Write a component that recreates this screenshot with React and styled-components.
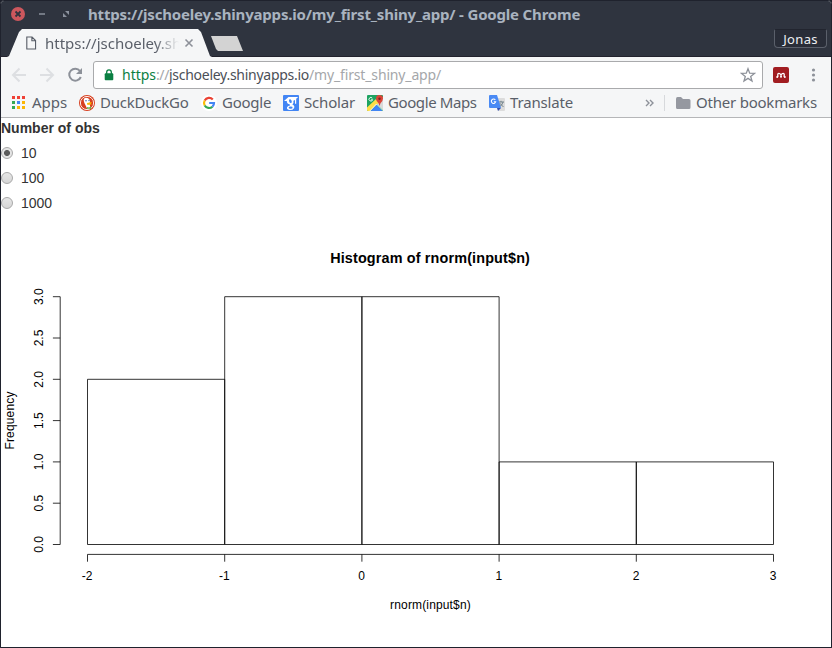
import React from 'react';
import styled, { createGlobalStyle } from 'styled-components';

const Global = createGlobalStyle`
  *, *::before, *::after { box-sizing: border-box; }
  body { margin: 0; background: #1f222d; }
`;

const Window = styled.div`
  width: 832px;
  height: 648px;
  display: flex;
  flex-direction: column;
  overflow: hidden;
  border: 1px solid #1f222d;
  border-radius: 4px 4px 0 0;
  background: #fff;
  font-family: "Noto Sans", "Open Sans", sans-serif;
  font-size: 15px;
  color: #5a5f69;
`;

const TitleBar = styled.header`
  height: 27px;
  flex: none;
  display: flex;
  align-items: flex-start;
  background: #2f343f;
`;

const WindowControls = styled.svg`
  width: 87px;
  height: 27px;
  flex: none;
`;

const Title = styled.div`
  font-weight: 700;
  line-height: 26px;
  letter-spacing: -0.18px;
  color: #a9b3bf;
  white-space: nowrap;
`;

const TabStrip = styled.div`
  height: 29px;
  flex: none;
  display: flex;
  padding: 1px 4px 0 6px;
  background: #2f343f;
  box-shadow: inset 0 -1px #22222d;
`;

const Tab = styled.div`
  width: 205px;
  height: 28px;
  display: flex;
  align-items: center;
  padding-left: 17px;
  background: #f5f6f7;
  clip-path: polygon(0 100%, 2px 96%, 12px 3px, 15px 0, 191px 0, 194px 3px, 203px 96%, 205px 100%);
`;

const TabTitle = styled.div`
  width: 134px;
  margin: 0 5px 0 7px;
  overflow: hidden;
  white-space: nowrap;
  line-height: 26px;
  mask-image: linear-gradient(90deg, #000 82%, transparent 100%);
`;

const NewTab = styled.div`
  width: 34px;
  height: 17px;
  margin: 6px 0 0 -2px;
  background: #d3d3d3;
  clip-path: polygon(1px 1px, 27px 1px, 33px 16px, 8px 16px, 6px 14px);
`;

const Profile = styled.div`
  width: 53px;
  height: 19px;
  margin: 0 0 0 auto;
  border: 1px solid #5b606b;
  border-top-color: #22252f;
  border-radius: 2px 2px 4px 4px;
  background: #292d38;
  color: #eef0f3;
  font-size: 13px;
  line-height: 18px;
  letter-spacing: 0.35px;
  text-align: center;
`;

const Toolbar = styled.div`
  height: 34px;
  flex: none;
  display: flex;
  align-items: center;
  padding: 2px 0 0 9px;
  background: #f5f6f7;
`;

const NavIcon = styled.svg`
  width: 18px;
  height: 18px;
  flex: none;
  margin-right: ${(p) => (p.$enabled ? 9 : 10)}px;
  fill: none;
  stroke: ${(p) => (p.$enabled ? '#8d9199' : '#dddfe2')};
  stroke-width: 2;
`;

const AddressBar = styled.div`
  width: 670px;
  height: 28px;
  flex: none;
  display: flex;
  align-items: center;
  padding: 0 6px 0 9px;
  border: 1px solid #a9aaac;
  border-radius: 3px;
  background: #fff;
  font-size: 14px;
  line-height: 23px;
  white-space: pre;
`;

const UrlPart = styled.span`
  width: ${(p) => p.$width}px;
  height: 25px;
  flex: none;
  letter-spacing: ${(p) => p.$spacing || 0}px;
  color: ${(p) => p.$color};
`;

const Glyph = styled.svg`
  display: block;
  flex: none;
  width: ${(p) => p.$size || 16}px;
  height: ${(p) => p.$size || 16}px;
  margin-left: ${(p) => p.$left || 0}px;
  margin-right: ${(p) => p.$right || 0}px;
`;

const BookmarkBar = styled.nav`
  height: 27px;
  flex: none;
  display: flex;
  align-items: center;
  padding: 0 0 3px 9px;
  border-bottom: 1px solid #b5b6b8;
  background: #f5f6f7;
`;

const Bookmark = styled.div`
  width: ${(p) => p.$width}px;
  flex: none;
  display: flex;
  align-items: center;
  gap: ${(p) => p.$gap || 5}px;
  line-height: 23px;
  letter-spacing: ${(p) => p.$spacing || 0}px;
  white-space: nowrap;
`;

const Divider = styled.div`
  width: 1px;
  height: 16px;
  margin: 0 11px 0 9px;
  background: #d7d9dc;
`;

const Page = styled.main`
  flex: 1;
  display: flex;
  flex-direction: column;
  background: #fff;
  color: #333;
  font-family: "Liberation Sans", Arial, sans-serif;
  font-size: 14px;
  line-height: 20px;
`;

const FieldLabel = styled.div`
  height: 25px;
  font-weight: 700;
`;

const Option = styled.label`
  height: 25px;
  display: flex;
  align-items: flex-start;
  gap: 8px;
`;

const Radio = styled.span`
  width: 12px;
  height: 12px;
  margin-top: 4px;
  border: 1px solid #a8a8a8;
  border-radius: 50%;
  background: ${(p) =>
    p.$checked
      ? 'radial-gradient(circle, #5c5c5c 0 2.6px, #e4e4e4 3.4px)'
      : 'linear-gradient(#e6e6e6, #d6d6d6)'};
`;

const Chart = styled.svg`
  width: 830px;
  height: 429px;
  display: block;
  font-family: "Liberation Sans", Arial, sans-serif;
  font-size: 12px;
  fill: #000;
`;

const ChartTitle = styled.text`
  font-size: 14.4px;
  font-weight: 700;
  letter-spacing: 0.15px;
  text-anchor: middle;
`;

const AxisText = styled.text`
  text-anchor: middle;
  letter-spacing: ${(p) => p.$spacing || 0}px;
`;

const Line = styled.path`
  fill: none;
  stroke: #000;
  stroke-width: 0.8;
`;

function AppsIcon() {
  const colors = ['#ef4136', '#ef4136', '#ef4136', '#34a853', '#4285f4', '#fbb605', '#34a853', '#fbb605', '#fbb605'];
  return (
    <Glyph viewBox="0 0 16 16">
      {colors.map((c, i) => (
        <rect key={i} x={2 + (i % 3) * 5} y={1 + Math.floor(i / 3) * 5} width="3" height="3" fill={c} />
      ))}
    </Glyph>
  );
}

function DuckIcon() {
  return (
    <Glyph viewBox="0 0 16 16">
      <circle cx="8" cy="8" r="8" fill="#d63f20" />
      <circle cx="8" cy="8" r="6.6" fill="none" stroke="#fff" strokeWidth="0.9" />
      <path d="M5 3.4 7 2.7Q10.5 3 11 6l-.4 3 1 4.2-3.2 1-2-4.2Q4 5.5 5 3.4Z" fill="#fff" />
      <circle cx="7" cy="5.8" r="0.8" fill="#426ca8" />
      <circle cx="10" cy="5.5" r="0.7" fill="#426ca8" />
      <path d="m8 8 5-1-1.2 1.4 1.2.8-4.6.8Z" fill="#fbb800" />
      <path d="m8 12 2 .5 2-1v2.6l-2-.5-1.7.7Z" fill="#5caf43" />
    </Glyph>
  );
}

function GoogleIcon() {
  return (
    <Glyph viewBox="0 0 16 16">
      <circle cx="8" cy="8" r="8" fill="#fff" />
      <g fill="none" strokeWidth="2.2">
        <path d="M11.8 4.4A5 5 0 0 0 3.7 5.5" stroke="#ea4335" />
        <path d="M3.7 5.5a5 5 0 0 0 0 5" stroke="#fbbc05" />
        <path d="M3.7 10.5a5 5 0 0 0 7.7 1.2" stroke="#34a853" />
        <path d="M11.4 11.7A5 5 0 0 0 13 8H8.2" stroke="#4285f4" />
      </g>
    </Glyph>
  );
}

function ScholarIcon() {
  return (
    <Glyph viewBox="0 0 16 16">
      <rect width="16" height="16" rx="1" fill="#4285f4" />
      <path d="M1 6 5.500 2H15.200l-2 1.800v5h-1.200V5l-1.600.8Q11 8.500 9.400 9.600q2.800 1.400 1.600 3.600Q9.600 15.400 6.200 15 3 14.300 4.200 12.100q.8-1.200 3-1.500-.9-.7-.4-1.400Q3.600 9 3.800 6Z" fill="#fff" />
      <ellipse cx="7.400" cy="6.100" rx="1.300" ry="2" transform="rotate(-20 7.400 6.100)" fill="#4285f4" />
      <ellipse cx="7.600" cy="12.700" rx="2" ry="1.100" fill="#4285f4" />
    </Glyph>
  );
}

function MapsIcon() {
  return (
    <Glyph viewBox="0 0 16 16">
      <rect width="16" height="16" rx="1" fill="#1ea362" />
      <path d="m10 5 6-3v13l-7-7Z" fill="#dadada" />
      <path d="M0 12.500 9 4l2.500 4L3 16H1q-1 0-1-1Z" fill="#ffdd48" />
      <path d="m3.500 16 6-6.500 6 6.500Z" fill="#4285f4" />
      <path d="m2.800 16 6.700-7 6.500 6.500" fill="none" stroke="#fff" strokeWidth="0.900" />
      <path d="M12.500 0A3.500 3.500 0 0 0 9 3.600q0 2.400 2.500 4.600l1 2.800 1-2.800Q16 6 16 3.600A3.500 3.500 0 0 0 12.500 0Z" fill="#db4437" />
      <circle cx="12.500" cy="3.700" r="1.200" fill="#7b231e" />
      <path d="M5.300 3.200A1.800 1.800 0 1 0 5.600 4.700H4.200" fill="none" stroke="#fff" strokeWidth="0.900" />
    </Glyph>
  );
}

function TranslateIcon() {
  return (
    <Glyph viewBox="0 0 16 16">
      <path d="M6 3h9q1 0 1 1v11q0 1-1 1H9Z" fill="#dcdcdc" />
      <path d="M9 7h6M12 5.800V7m-2 5q3.300-1.500 4-5m-3.500 1 4 4" fill="none" stroke="#71828b" strokeWidth="1" />
      <path d="M1 0h7l4 13H1q-1 0-1-1V1q0-1 1-1Z" fill="#4a8af4" />
      <path d="m8 13 4 0-3 3Z" fill="#3450b0" />
      <path d="M6.300 4.900a2.200 2.200 0 1 0 .4 1.800H4.800" fill="none" stroke="#fff" strokeWidth="1.100" />
    </Glyph>
  );
}

const bookmarks = [
  { label: 'Apps', icon: AppsIcon, width: 69, gap: 6 },
  { label: 'DuckDuckGo', icon: DuckIcon, width: 122, spacing: -0.22 },
  { label: 'Google', icon: GoogleIcon, width: 82, spacing: -0.25 },
  { label: 'Scholar', icon: ScholarIcon, width: 84, spacing: -0.18 },
  { label: 'Google Maps', icon: MapsIcon, width: 122, spacing: -0.4 },
  { label: 'Translate', icon: TranslateIcon, width: 156, spacing: -0.17 },
];

const frequencies = [2, 3, 3, 1, 1];
const xAt = (v) => 86.5 + (v + 2) * 137.2;
const yAt = (v) => 326.5 - v * 82.6;

function Histogram() {
  const xTicks = [-2, -1, 0, 1, 2, 3];
  const yTicks = [0, 0.5, 1, 1.5, 2, 2.5, 3];
  return (
    <Chart viewBox="0 0 830 429">
      <ChartTitle x="429.1" y="45">Histogram of rnorm(input$n)</ChartTitle>
      {frequencies.map((n, i) => (
        <Line key={i} d={`M${xAt(i - 2)} ${yAt(0)}V${yAt(n)}H${xAt(i - 1)}V${yAt(0)}Z`} />
      ))}
      <Line d={`M${xAt(-2)} 336.4H${xAt(3)}`} />
      {xTicks.map((v) => (
        <React.Fragment key={v}>
          <Line d={`M${xAt(v)} 336.4v7.3`} />
          <AxisText x={xAt(v) - 0.3} y="362">{v}</AxisText>
        </React.Fragment>
      ))}
      <Line d={`M59.2 ${yAt(0)}V${yAt(3)}`} />
      {yTicks.map((v) => (
        <React.Fragment key={v}>
          <Line d={`M59.2 ${yAt(v)}h-7.3`} />
          <AxisText transform={`translate(42 ${yAt(v)}) rotate(-90)`}>{v.toFixed(1)}</AxisText>
        </React.Fragment>
      ))}
      <AxisText $spacing={0.15} x="429.5" y="391">rnorm(input$n)</AxisText>
      <AxisText $spacing={0.15} transform="translate(13.4 202.5) rotate(-90)">Frequency</AxisText>
    </Chart>
  );
}

export default function App() {
  return (
    <>
      <Global />
      <Window>
        <TitleBar>
          <WindowControls viewBox="0 0 87 27">
            <circle cx="17" cy="13" r="7" fill="#cc575d" />
            <path d="m14.500 10.500 5 5m0-5-5 5" stroke="#2f343f" strokeWidth="1.800" />
            <path d="M38 13h6" stroke="#8b919d" strokeWidth="1.600" />
            <path d="M64 10h4v4Zm-2 2v4h4Z" fill="#8b919d" />
          </WindowControls>
          <Title>https://jschoeley.shinyapps.io/my_first_shiny_app/ - Google Chrome</Title>
        </TitleBar>
        <TabStrip>
          <Tab>
            <Glyph viewBox="0 0 14 16" $size={14}>
              <path d="M2.200 1.200h6l4 4v9.600h-10ZM8 1.200v4.200h4.200" fill="none" stroke="#5a5f69" strokeWidth="1.300" />
            </Glyph>
            <TabTitle>https://jschoeley.sh</TabTitle>
            <Glyph viewBox="0 0 10 10" $size={10}>
              <path d="m1.500 1.500 7 7m0-7-7 7" stroke="#8d9199" strokeWidth="1.600" />
            </Glyph>
          </Tab>
          <NewTab />
          <Profile>Jonas</Profile>
        </TabStrip>
        <Toolbar>
          <NavIcon viewBox="0 0 18 18"><path d="M16 9H3m6.500-6.500L3 9l6.500 6.500" /></NavIcon>
          <NavIcon viewBox="0 0 18 18"><path d="M2 9h13M8.500 2.500 15 9l-6.500 6.500" /></NavIcon>
          <NavIcon viewBox="0 0 18 18" $enabled>
            <path d="M14 5A6 6 0 1 0 14.800 11" />
            <path d="M16 2v6h-6Z" fill="#8d9199" stroke="none" />
          </NavIcon>
          <AddressBar>
            <Glyph viewBox="0 0 10 14" $size={12} $right={7}>
              <rect x="0" y="5" width="10" height="8" rx="1" fill="#0b8043" />
              <path d="M2.300 6V3.700a2.700 2.700 0 0 1 5.400 0V6" fill="none" stroke="#0b8043" strokeWidth="1.500" />
            </Glyph>
            <UrlPart $width={34} $color="#0b8043">https</UrlPart>
            <UrlPart $width={13} $spacing={-0.4} $color="#a5a7aa">://</UrlPart>
            <UrlPart $width={140} $spacing={-0.27} $color="#4b4f57">jschoeley.shinyapps.io</UrlPart>
            <UrlPart $width={132} $spacing={-0.15} $color="#a5a7aa">/my_first_shiny_app/</UrlPart>
            <Glyph viewBox="0 0 16 16" $left={299}>
              <path d="m8 1.700 1.700 4.500 4.800.2-3.800 3 1.300 4.600L8 11.400 4 14l1.300-4.600-3.800-3 4.800-.2Z" fill="none" stroke="#8d9199" strokeWidth="1.300" />
            </Glyph>
          </AddressBar>
          <Glyph viewBox="0 0 16 16" $left={10} $right={16}>
            <rect width="16" height="16" rx="2" fill="#a11d21" />
            <path d="M4.800 10V7.300q0-1 1-1 1.200 0 2.200 1.500 1-1.500 2.200-1.500 1 0 1 1V10M8 7.800V9.500" fill="none" stroke="#fff" strokeWidth="1.300" />
            <circle cx="4.200" cy="10" r="1" fill="#fff" />
            <circle cx="8" cy="9.800" r="1" fill="#fff" />
            <circle cx="11.800" cy="10" r="1" fill="#fff" />
          </Glyph>
          <Glyph viewBox="0 0 16 16">
            {[3, 8, 13].map((y) => <circle key={y} cx="8.500" cy={y} r="1.600" fill="#8d9199" />)}
          </Glyph>
        </Toolbar>
        <BookmarkBar>
          {bookmarks.map(({ label, icon: Icon, width, spacing, gap }) => (
            <Bookmark key={label} $width={width} $spacing={spacing} $gap={gap}>
              <Icon />
              {label}
            </Bookmark>
          ))}
          <Glyph viewBox="0 0 10 10" $size={10}>
            <path d="m1 2 3 3-3 3m4-6 3 3-3 3" fill="none" stroke="#8d9199" strokeWidth="1.400" />
          </Glyph>
          <Divider />
          <Bookmark $width={144} $spacing={-0.22} $gap={4}>
            <Glyph viewBox="0 0 16 16">
              <path d="M0 4q0-2 1.500-2H5l2 2h6q1.500 0 1.500 1.500v7q0 1.500-1.500 1.500H1.500Q0 14 0 12.500Z" fill="#9598a0" />
            </Glyph>
            Other bookmarks
          </Bookmark>
        </BookmarkBar>
        <Page>
          <FieldLabel>Number of obs</FieldLabel>
          {[10, 100, 1000].map((n) => (
            <Option key={n}>
              <Radio $checked={n === 10} />
              {n}
            </Option>
          ))}
          <Histogram />
        </Page>
      </Window>
    </>
  );
}
